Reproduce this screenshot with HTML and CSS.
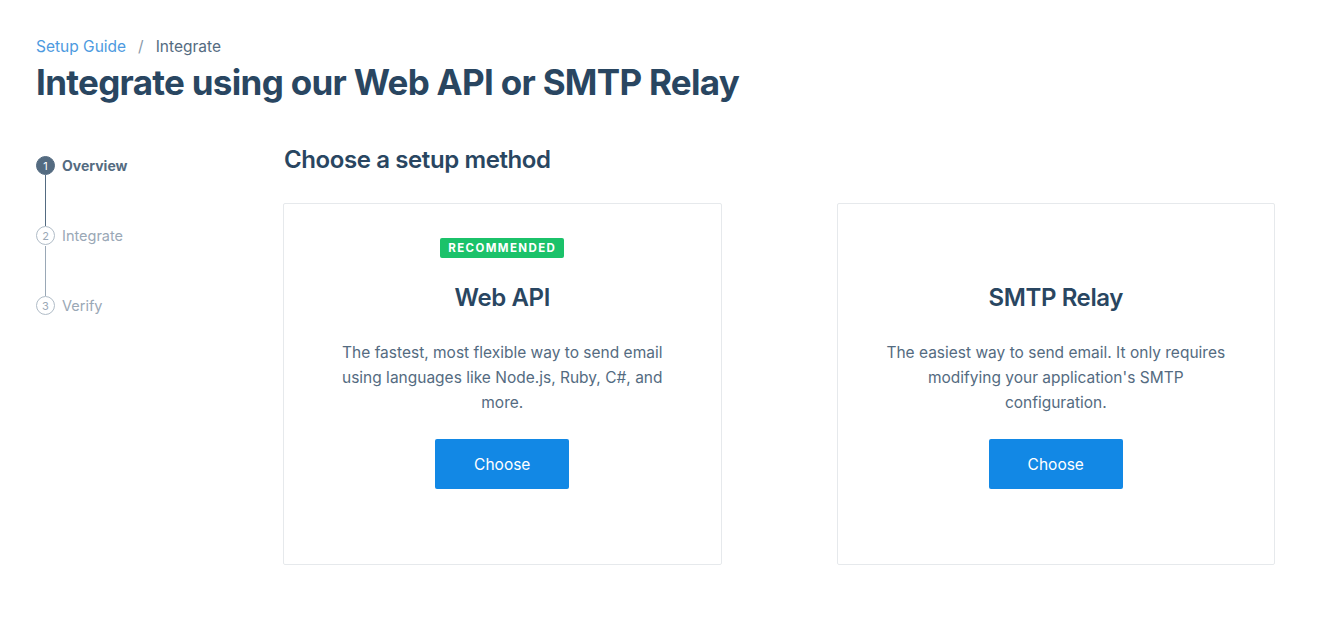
FILE: index.html
```html
<!DOCTYPE html>
<html>
<head>
<meta charset="utf-8">
<link rel="stylesheet" href="styles.css">
</head>
<body>
<div class="page">
  <nav class="crumbs"><a class="crumb-link">Setup Guide</a><span class="crumb-sep">/</span><span class="crumb-current">Integrate</span></nav>
  <h1 class="title">Integrate using our Web API or SMTP Relay</h1>
  <div class="main">
    <ol class="steps">
      <li class="step active"><span class="dot">1</span><span class="step-label">Overview</span></li>
      <li class="step"><span class="dot">2</span><span class="step-label">Integrate</span></li>
      <li class="step last"><span class="dot">3</span><span class="step-label">Verify</span></li>
    </ol>
    <section class="content">
      <h2 class="section-title">Choose a setup method</h2>
      <div class="cards">
        <div class="card">
          <span class="badge">RECOMMENDED</span>
          <h3 class="card-title">Web API</h3>
          <p class="card-desc">The fastest, most flexible way to send email using languages like Node.js, Ruby, C#, and more.</p>
          <button class="btn">Choose</button>
        </div>
        <div class="card">
          <span class="badge hidden">RECOMMENDED</span>
          <h3 class="card-title">SMTP Relay</h3>
          <p class="card-desc">The easiest way to send email. It only requires modifying your application's SMTP configuration.</p>
          <button class="btn">Choose</button>
        </div>
      </div>
    </section>
  </div>
</div>
</body>
</html>
```
FILE: styles.css
```css
* { box-sizing: border-box; }
body { margin: 0; background: #fff; font-family: Inter, "Noto Sans", sans-serif; color: #294661; }
.page { padding: 36px 67px 0 36px; }
.crumbs { font-size: 15.5px; line-height: 21px; display: flex; align-items: center; }
.crumb-link { color: #4d9ae0; }
.crumb-sep { color: #8a9aaa; margin: 0 12px; }
.crumb-current { color: #546b81; }
.title { margin: 2px 0 0; font-size: 35px; line-height: 46px; font-weight: 700; letter-spacing: -0.7px; color: #294661; }
.main { display: flex; margin-top: 40px; }
.steps { list-style: none; margin: 11px 0 0; padding: 0; width: 247px; flex: none; }
.step { display: flex; height: 70px; align-items: flex-start; position: relative; }
.step::after { content: ""; position: absolute; left: 9px; top: 20px; width: 1px; height: 50px; background: #9aa8b6; }
.step.active::after { background: #546b81; top: 19px; height: 51px; }
.step.last::after { display: none; }
.dot { width: 19px; height: 19px; border-radius: 50%; border: 1px solid #b0bcc7; color: #9aa8b6; font-size: 11px; display: flex; align-items: center; justify-content: center; flex: none; }
.step.active .dot { background: #546b81; border-color: #546b81; color: #fff; }
.step-label { margin-left: 7px; font-size: 14px; line-height: 19px; color: #9aa8b6; }
.step:not(.active) .step-label { font-size: 14.5px; }
.step.active .step-label { color: #546b81; font-weight: 700; }
.content { flex: 1; }
.section-title { margin: 0 0 0 1px; font-size: 24px; line-height: 30px; font-weight: 600; letter-spacing: -0.4px; color: #294661; }
.cards { display: grid; grid-template-columns: 1fr 1fr; column-gap: 115px; margin-top: 28px; }
.card { border: 1px solid #e6e9ec; border-radius: 2px; padding: 34px 45px 75px; display: flex; flex-direction: column; align-items: center; text-align: center; }
.badge { background: #1bc26a; color: #fff; font-size: 11.5px; font-weight: 700; letter-spacing: 1.4px; line-height: 20px; padding: 0 8px; border-radius: 2px; }
.badge.hidden { visibility: hidden; }
.card-title { margin: 25px 0 0; font-size: 24px; line-height: 30px; font-weight: 600; letter-spacing: -0.4px; color: #294661; }
.card-desc { margin: 27px 0 0; font-size: 15.5px; line-height: 25px; color: #546b81; }
.btn { margin-top: 24px; width: 134px; height: 50px; border: none; border-radius: 2px; background: #1288e5; color: #fff; font-family: inherit; font-size: 15.5px; }
```
